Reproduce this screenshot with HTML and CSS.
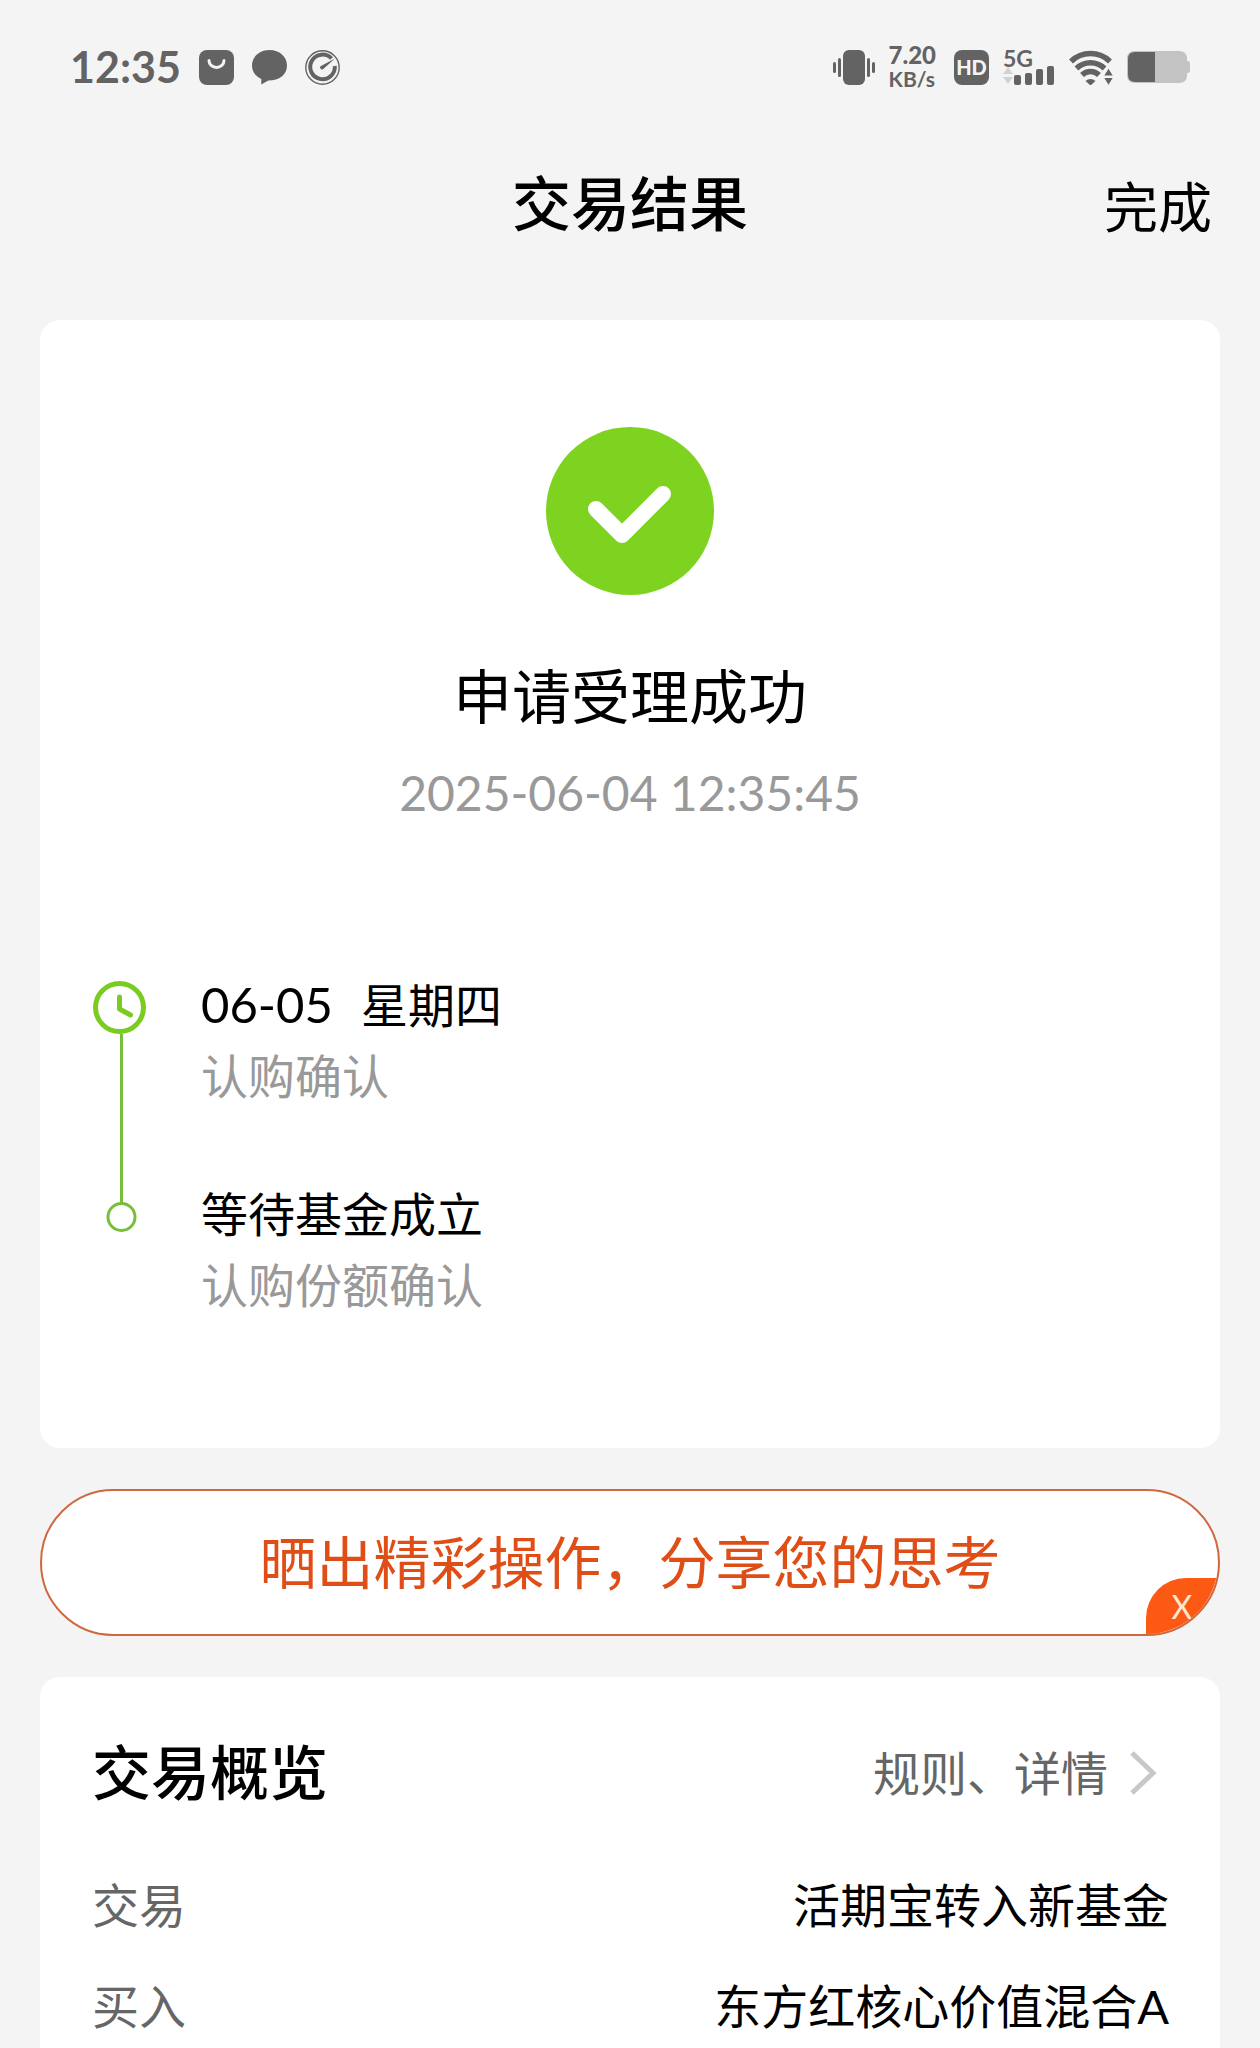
FILE: index.html
```html
<!DOCTYPE html>
<html lang="zh-CN">
<head>
  <meta charset="utf-8">
  <meta name="viewport" content="width=device-width, initial-scale=1">
  <title>交易结果</title>
  <link rel="stylesheet" href="styles.css">
</head>
<body>
  <div class="status-bar">
    <div class="status-left">
      <span class="clock">12:35</span>
      <svg width="35" height="35" viewBox="0 0 35 35">
        <rect width="35" height="35" rx="8" fill="#636363"/>
        <path d="M10 10.500a7.500 7 0 0 0 15 0" fill="none" stroke="#f4f4f4" stroke-width="3" stroke-linecap="round"/>
      </svg>
      <svg width="35" height="35" viewBox="0 0 35 35">
        <path d="M17.500 0C7.500 0 0 6.700 0 15.500c0 6 3.600 11 9.300 13.500V34.500l7-4C27.500 30.500 35 24.500 35 15.500 35 6.700 27.500 0 17.500 0z" fill="#636363"/>
      </svg>
      <svg width="35" height="35" viewBox="0 0 35 35" fill="none" stroke="#636363">
        <circle cx="17.500" cy="17.500" r="16.700" stroke-width="1.400"/>
        <path d="M26.500 8.500A12.300 12.300 0 1 0 29.800 16" stroke-width="4"/>
        <path d="M30 8.500L15.500 16.300a2 2 0 0 0 2.500 3z" fill="#636363" stroke="none"/>
      </svg>
    </div>
    <div class="status-right">
      <svg width="42" height="35" viewBox="0 0 42 35" fill="#636363">
        <rect x="10" width="22" height="35" rx="6"/>
        <rect x="0" y="12" width="3" height="11" rx="1.500"/>
        <rect x="5" y="8" width="3" height="19" rx="1.500"/>
        <rect x="34" y="8" width="3" height="19" rx="1.500"/>
        <rect x="39" y="12" width="3" height="11" rx="1.500"/>
      </svg>
      <span class="speed"><b>7.20</b><span>KB/s</span></span>
      <span class="hd">HD</span>
      <span class="signal">
        <b>5G</b>
        <svg width="52" height="20" viewBox="0 0 52 20" fill="#636363">
          <path d="M5 2l5 7H0zM0 12h10l-5 7z" fill="#d2d2d2"/>
          <rect x="11" y="10" width="7" height="10" rx="2"/>
          <rect x="22" y="8" width="7" height="12" rx="2"/>
          <rect x="33" y="4" width="7" height="16" rx="2"/>
          <rect x="44" y="1" width="7" height="19" rx="2"/>
        </svg>
      </span>
      <svg width="44" height="35" viewBox="0 0 44 35" fill="none" stroke="#636363" stroke-width="5.500">
        <path d="M2 11.500a28 28 0 0 1 39 0M7.500 18.500a20 20 0 0 1 28 0M13 25a12 12 0 0 1 17 0"/>
        <path d="M16.500 31a7.500 7.500 0 0 1 10 0l-5 4.500z" fill="#636363" stroke="none"/>
        <path d="M39.500 18l5 8h-10zM34.500 27.500h10l-5 8z" fill="#636363" stroke="#f4f4f4" stroke-width="1"/>
      </svg>
      <svg width="63" height="32" viewBox="0 0 63 32">
        <path d="M8 0h44q8 0 8 8v2h1q2 0 2 3v6q0 3-2 3h-1v2q0 8-8 8H8q-8 0-8-8V8q0-8 8-8z" fill="#c3c3c3"/>
        <path d="M8 1h20v30H8q-7 0-7-7V8q0-7 7-7z" fill="#636363"/>
      </svg>
    </div>
  </div>

  <header class="nav">
    <h1>交易结果</h1>
    <button type="button" class="done">完成</button>
  </header>

  <main>
    <section class="card result">
      <svg class="check" width="168" height="168" viewBox="0 0 168 168">
        <circle cx="84" cy="84" r="84" fill="#7ed321"/>
        <path d="M50 82l26 26 41-41" fill="none" stroke="#fff" stroke-width="16" stroke-linecap="round" stroke-linejoin="round"/>
      </svg>
      <h2>申请受理成功</h2>
      <time class="result-time">2025-06-04 12:35:45</time>

      <ol class="timeline">
        <li>
          <div class="marker marker-clock">
            <svg width="57" height="53" viewBox="0 0 57 53" fill="none" stroke="#7acb22" stroke-linecap="round" stroke-linejoin="round">
              <circle cx="26.500" cy="26.500" r="24" stroke-width="5"/>
              <path d="M26.500 16v12l11 6" stroke-width="5"/>
            </svg>
            <i class="line"></i>
          </div>
          <div class="step">
            <p class="step-title"><span class="day">06-05</span>星期四</p>
            <p class="step-desc">认购确认</p>
          </div>
        </li>
        <li>
          <div class="marker">
            <svg width="57" height="48" viewBox="0 0 57 48" fill="none" stroke="#77bf3a" stroke-width="3">
              <path d="M28.500 0v19"/>
              <circle cx="28.500" cy="33" r="13.500"/>
            </svg>
          </div>
          <div class="step">
            <p class="step-title">等待基金成立</p>
            <p class="step-desc">认购份额确认</p>
          </div>
        </li>
      </ol>
    </section>

    <div class="share">
      <a href="#share">晒出精彩操作，分享您的思考</a>
      <button type="button" class="share-close" aria-label="关闭">X</button>
    </div>

    <section class="card overview">
      <div class="overview-head">
        <h2>交易概览</h2>
        <a href="#rules">规则、详情
          <svg width="27" height="44" viewBox="0 0 27 44">
            <path d="M2 2l21 20L2 42" fill="none" stroke="#c8c8c8" stroke-width="5"/>
          </svg>
        </a>
      </div>
      <dl>
        <div class="row"><dt>交易</dt><dd>活期宝转入新基金</dd></div>
        <div class="row"><dt>买入</dt><dd>东方红核心价值混合A</dd></div>
      </dl>
    </section>
  </main>
</body>
</html>
```
FILE: styles.css
```css
* {
  box-sizing: border-box;
  margin: 0;
  padding: 0;
}

body {
  background: #f4f4f4;
  color: #000;
  font-family: Lato, "Noto Sans CJK SC", sans-serif;
  font-size: 47px;
  line-height: 60px;
}

svg {
  display: block;
  flex: none;
}

a {
  color: inherit;
  text-decoration: none;
}

button {
  border: 0;
  background: none;
  font-family: inherit;
}

/* phone status bar */
.status-bar {
  display: flex;
  justify-content: space-between;
  align-items: center;
  height: 134px;
  padding: 0 70px;
  color: #636363;
}

.status-left,
.status-right {
  display: flex;
  align-items: center;
}

.status-left { gap: 18px; }
.status-right { gap: 14px; }

.clock {
  font-size: 43px;
  font-weight: bold;
}

.speed {
  display: flex;
  flex-direction: column;
  margin-right: 4px;
  font-size: 21px;
  font-weight: bold;
  line-height: 24px;
}

.speed b {
  font-size: 24px;
}

.hd {
  width: 35px;
  height: 35px;
  border-radius: 8px;
  background: #636363;
  color: #f4f4f4;
  font-size: 20px;
  font-weight: 900;
  line-height: 35px;
  text-align: center;
}

.signal {
  display: flex;
  flex-direction: column;
  height: 35px;
}

.signal b {
  height: 15px;
  font-size: 23px;
  line-height: 17px;
}

/* title bar */
.nav {
  display: grid;
  grid-template-columns: 1fr auto 1fr;
  align-items: center;
  height: 140px;
  padding: 0 48px;
}

.nav h1 {
  grid-column: 2;
  font-size: 59px;
  font-weight: 500;
}

.done {
  justify-self: end;
  color: #000;
  font-size: 54px;
}

main {
  display: flex;
  flex-direction: column;
  gap: 41px;
  padding: 46px 40px 0;
}

.card {
  border-radius: 20px;
  background: #fff;
}

.card h2 {
  font-size: 59px;
  line-height: 80px;
}

/* result */
.result {
  display: flex;
  flex-direction: column;
  align-items: center;
  padding: 107px 53px 133px;
}

.result h2 {
  margin-top: 62px;
  font-weight: normal;
}

.result-time {
  margin-top: 26px;
  color: #999;
  font-size: 48px;
}

.timeline {
  align-self: stretch;
  margin-top: 151px;
  list-style: none;
}

.timeline li {
  display: flex;
  gap: 51px;
}

.timeline li + li .step {
  padding-bottom: 0;
}

.marker {
  display: flex;
  flex-direction: column;
  align-items: center;
}

.marker-clock {
  padding-top: 7px;
}

.line {
  flex: 1;
  width: 3px;
  background: #77bf3a;
}

.step {
  padding-bottom: 78px;
}

.day {
  margin-right: 28px;
  font-size: 49px;
}

.step-desc {
  margin-top: 11px;
  color: #999;
}

/* share banner */
.share {
  position: relative;
  overflow: hidden;
  height: 147px;
  border: 2px solid #d0683f;
  border-radius: 74px;
  background: #fff;
  color: #e04e17;
  font-size: 57px;
  line-height: 143px;
  text-align: center;
}

.share a {
  display: block;
}

.share-close {
  position: absolute;
  right: 0;
  bottom: 0;
  width: 72px;
  height: 56px;
  border-radius: 40px 0 0 0;
  background: #fc5a14;
  color: #ffe9d2;
  font-size: 32px;
}

/* overview */
.overview {
  padding: 56px 51px 12px 52px;
  border-radius: 20px 20px 0 0;
}

.overview-head {
  display: flex;
  justify-content: space-between;
  align-items: center;
  margin-bottom: 62px;
}

.overview-head h2 {
  font-weight: 500;
}

.overview-head a {
  display: flex;
  align-items: center;
  gap: 22px;
  padding-right: 12px;
  color: #666;
}

.row {
  display: flex;
  justify-content: space-between;
}

.row + .row {
  margin-top: 41px;
}

.row dt {
  color: #666;
}
```
